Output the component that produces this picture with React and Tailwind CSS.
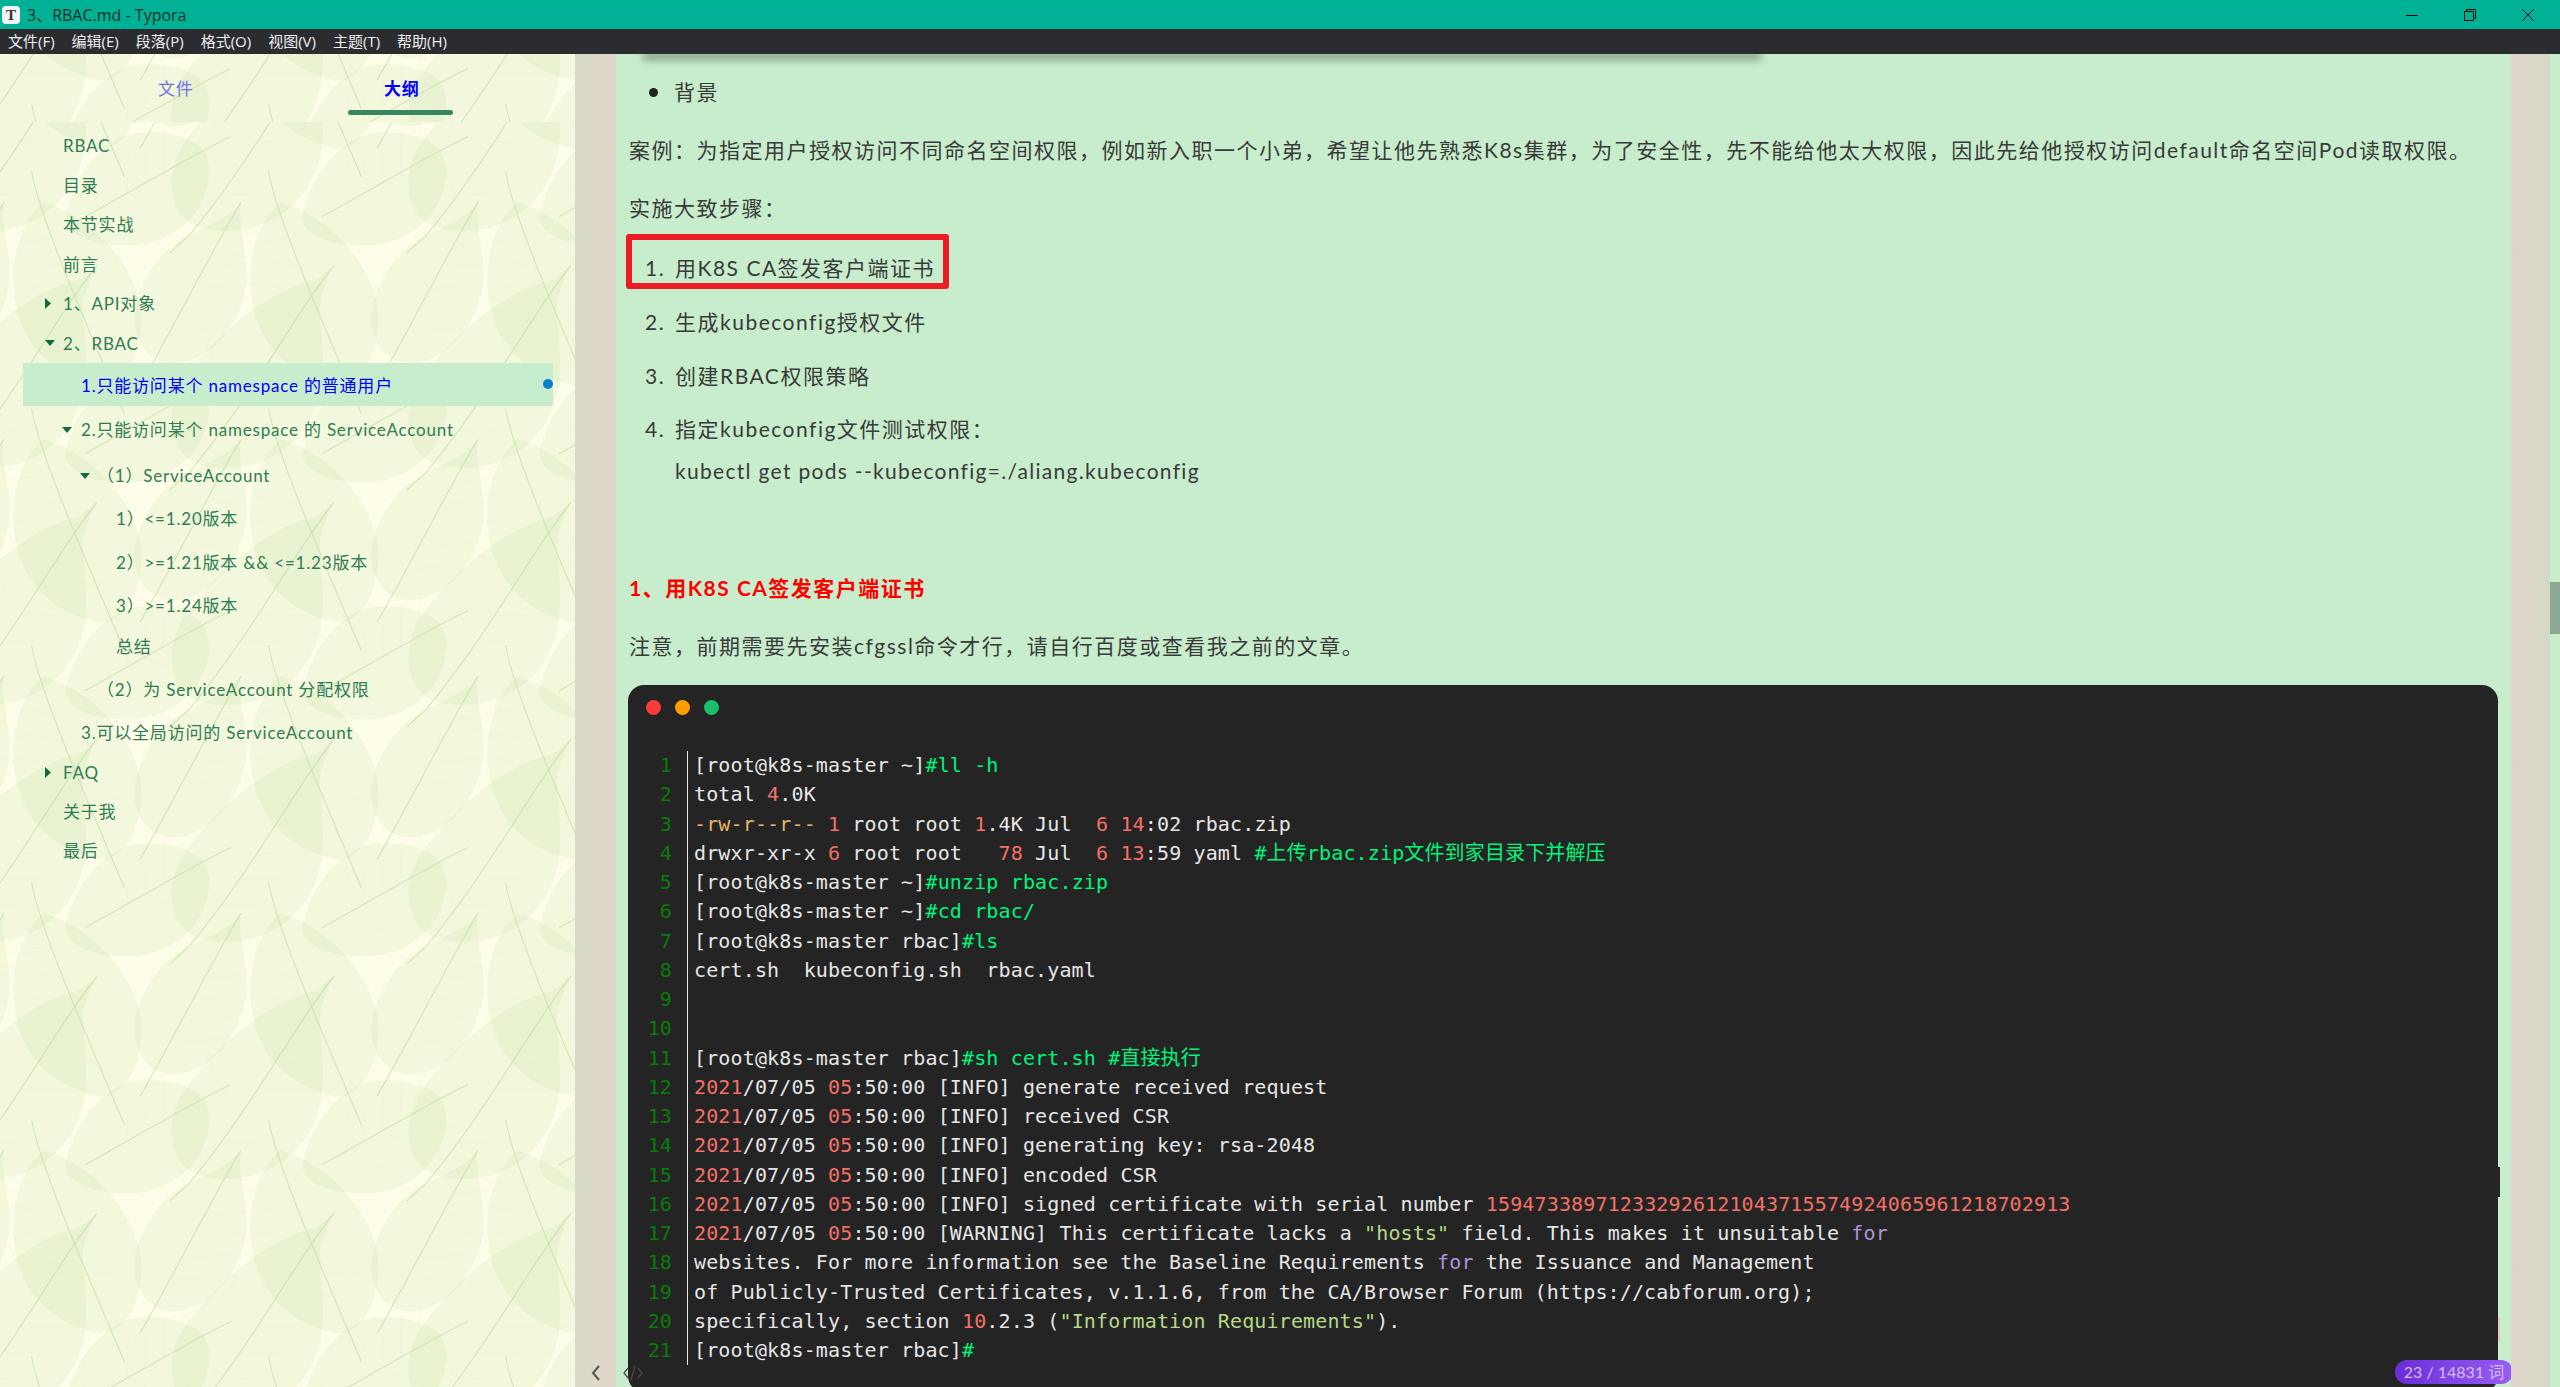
const uiFont = { fontFamily: '"Lato", "Noto Sans CJK SC", sans-serif' };

const LEAVES = [
  {
    body: "M110 255 C60 300 25 400 35 500 C45 620 110 730 250 760 C320 770 370 650 355 540 C340 440 250 300 110 255 Z",
    rib: "M80 170 C100 300 230 620 315 840",
    from: [95, 260],
    to: [290, 760],
  },
  {
    body: "M800 470 C700 490 560 600 470 740 C430 800 425 880 450 930 C480 990 560 1000 640 980 C740 950 800 860 815 760 C825 640 800 540 815 510 C825 480 835 445 845 430 Z",
    rib: "M845 430 C760 540 640 790 480 1000 L430 1050",
    from: [800, 500],
    to: [490, 985],
  },
  {
    body: "M610 255 C560 330 450 330 390 430 C340 510 330 580 350 630 C370 690 420 710 470 695 C560 670 620 560 625 460 C625 380 600 310 610 255 Z",
    rib: "M610 255 C540 380 430 620 355 760",
    from: [590, 295],
    to: [385, 695],
  },
  {
    body: "M165 950 C180 880 220 770 320 725 C380 705 470 720 510 760 C540 800 535 870 500 930 C450 1010 370 1035 300 1028 C230 1025 170 1000 165 950 Z",
    rib: "M585 728 C500 770 350 870 215 950",
    from: [520, 765],
    to: [215, 950],
  },
];

// side veins, worked out from the line of the midrib
const veins = (leaf) => {
  const [x1, y1] = leaf.from;
  const [x2, y2] = leaf.to;
  const dx = x2 - x1;
  const dy = y2 - y1;
  let d = "";
  [0.2, 0.35, 0.5, 0.65, 0.8].forEach((t) => {
    const x = x1 + dx * t;
    const y = y1 + dy * t;
    [1, -1].forEach((s) => {
      const ex = x - dx * 0.18 + s * dy * 0.28;
      const ey = y - dy * 0.18 - s * dx * 0.28;
      d += `M${x} ${y} L${ex} ${ey} `;
    });
  });
  return d;
};

const LeafBg = ({ id }) => (
  <svg className="absolute inset-0 w-full h-full pointer-events-none" aria-hidden="true">
    <defs>
      <g id={`${id}-leaves`}>
        {LEAVES.map((leaf, i) => (
          <g key={i}>
            <path d={leaf.body} fill="#a6cf88" fillOpacity="0.13" />
            <path d={veins(leaf)} stroke="#bcdaa0" strokeOpacity="0.12" strokeWidth="1" fill="none" />
            <path d={leaf.rib} stroke="#bcdca0" strokeOpacity="0.6" strokeWidth="3" fill="none" />
          </g>
        ))}
      </g>
      <pattern
        id={id}
        patternUnits="userSpaceOnUse"
        x="0"
        y="-12"
        width="237"
        height="237"
        viewBox="0 0 600 655"
        preserveAspectRatio="none"
      >
        {[-600, 0, 600].map((x) =>
          [-655, 0, 655].map((y) => <use key={`${x}${y}`} href={`#${id}-leaves`} x={x} y={y} />)
        )}
      </pattern>
    </defs>
    <rect width="100%" height="100%" fill={`url(#${id})`} />
  </svg>
);

const Right = () => (
  <svg width="6" height="11" viewBox="0 0 6 11" className="text-[#0f6b3e]">
    <path d="M0 0 L6 5.5 L0 11 Z" fill="currentColor" />
  </svg>
);

const Down = () => (
  <svg width="10" height="6" viewBox="0 0 10 6" className="text-[#0f6b3e]">
    <path d="M0 0 L10 0 L5 6 Z" fill="currentColor" />
  </svg>
);

const OUTLINE = [
  { text: "RBAC", h: "h-[39.5px]", pl: "pl-[63px]" },
  { text: "目录", h: "h-[39.5px]", pl: "pl-[63px]" },
  { text: "本节实战", h: "h-[39.5px]", pl: "pl-[63px]" },
  { text: "前言", h: "h-[39.5px]", pl: "pl-[63px]" },
  { text: "1、API对象", h: "h-[39.5px]", pl: "pl-[45px]", arrow: "right", gap: "w-[18px]" },
  { text: "2、RBAC", h: "h-[39.5px]", pl: "pl-[45px]", arrow: "down", gap: "w-[18px]" },
  { text: "1.只能访问某个 namespace 的普通用户", active: true },
  { text: "2.只能访问某个 namespace 的 ServiceAccount", h: "h-[47px]", pl: "pl-[62px]", arrow: "down", gap: "w-[19px]" },
  { text: "（1）ServiceAccount", h: "h-[45px]", pl: "pl-[80px]", arrow: "down", gap: "w-[17px]" },
  { text: "1）<=1.20版本", h: "h-[42px]", pl: "pl-[116px]" },
  { text: "2）>=1.21版本 && <=1.23版本", h: "h-[45px]", pl: "pl-[116px]" },
  { text: "3）>=1.24版本", h: "h-[41px]", pl: "pl-[116px]" },
  { text: "总结", h: "h-[42px]", pl: "pl-[116px]" },
  { text: "（2）为 ServiceAccount 分配权限", h: "h-[44px]", pl: "pl-[97px]" },
  { text: "3.可以全局访问的 ServiceAccount", h: "h-[41px]", pl: "pl-[81px]" },
  { text: "FAQ", h: "h-[39px]", pl: "pl-[45px]", arrow: "right", gap: "w-[18px]" },
  { text: "关于我", h: "h-[39px]", pl: "pl-[63px]" },
  { text: "最后", h: "h-[40px]", pl: "pl-[63px]" },
];

const Sidebar = () => (
  <aside
    className="w-[575px] shrink-0 flex flex-col bg-[#fefde7] text-[17px] tracking-[0.8px] text-[#2f7d54]"
    style={uiFont}
  >
    <div className="relative h-[68px] shrink-0">
      <LeafBg id="leaf-head" />
      <div className="relative h-full">
        <div className="flex">
          <div className="w-[237px] pl-[158px] pt-[23px] leading-6 text-[#6f6fe8]">文件</div>
          <div className="w-[220px] pl-[147px] pt-[23px] leading-6 font-bold text-[#0000ff]">大纲</div>
        </div>
        <div className="ml-[348px] mt-[9px] w-[105px] h-[5px] rounded-full bg-[#38875c]" />
      </div>
    </div>
    <div className="relative flex-1 pt-[4px]">
      <LeafBg id="leaf-list" />
      <div className="relative">
        {OUTLINE.map((row) =>
          row.active ? (
            <div
              key={row.text}
              className="relative ml-[23px] w-[530px] h-[43px] pl-[58px] pt-[2px] flex items-center bg-[#c7edcc] text-[#0000ff]"
            >
              {row.text}
              <span className="absolute right-0 top-[16px] w-[10px] h-[10px] rounded-full bg-[#0a7fd0]" />
            </div>
          ) : (
            <div key={row.text} className={`flex items-center ${row.h} ${row.pl}`}>
              {row.arrow && (
                <span className={`${row.gap} flex items-center`}>{row.arrow === "right" ? <Right /> : <Down />}</span>
              )}
              {row.text}
            </div>
          )
        )}
      </div>
    </div>
  </aside>
);

const R = ({ children }) => <span className="text-[#f47067]">{children}</span>;
const G = ({ children }) => <span className="text-[#00f57a]">{children}</span>;
const Y = ({ children }) => <span className="text-[#e5b567]">{children}</span>;
const S = ({ children }) => <span className="text-[#b5d986]">{children}</span>;
const K = ({ children }) => <span className="text-[#b392d8]">{children}</span>;

const stamp = (
  <>
    <R>2021</R>/07/05 <R>05</R>:50:00
  </>
);

const CODE = [
  <>[root@k8s-master ~]<G>#ll -h</G></>,
  <>total <R>4</R>.0K</>,
  <><Y>-rw-r--r--</Y> <R>1</R> root root <R>1</R>.4K Jul  <R>6</R> <R>14</R>:02 rbac.zip</>,
  <>drwxr-xr-x <R>6</R> root root   <R>78</R> Jul  <R>6</R> <R>13</R>:59 yaml <G>#上传rbac.zip文件到家目录下并解压</G></>,
  <>[root@k8s-master ~]<G>#unzip rbac.zip</G></>,
  <>[root@k8s-master ~]<G>#cd rbac/</G></>,
  <>[root@k8s-master rbac]<G>#ls</G></>,
  <>cert.sh  kubeconfig.sh  rbac.yaml</>,
  <></>,
  <></>,
  <>[root@k8s-master rbac]<G>#sh cert.sh #直接执行</G></>,
  <>{stamp} [INFO] generate received request</>,
  <>{stamp} [INFO] received CSR</>,
  <>{stamp} [INFO] generating key: rsa-2048</>,
  <>{stamp} [INFO] encoded CSR</>,
  <>{stamp} [INFO] signed certificate with serial number <R>159473389712332926121043715574924065961218702913</R></>,
  <>{stamp} [WARNING] This certificate lacks a <S>"hosts"</S> field. This makes it unsuitable <K>for</K></>,
  <>websites. For more information see the Baseline Requirements <K>for</K> the Issuance and Management</>,
  <>of Publicly-Trusted Certificates, v.1.1.6, from the CA/Browser Forum (https://cabforum.org);</>,
  <>specifically, section <R>10</R>.2.3 (<S>"Information Requirements"</S>).</>,
  <>[root@k8s-master rbac]<G>#</G></>,
];

const CodeBlock = () => (
  <div className="relative mt-[24px] h-[707px] shrink-0 rounded-[16px] bg-[#242424]">
    <div className="flex items-center h-[44px] pl-[18px] gap-[14px]">
      <span className="w-[15px] h-[15px] rounded-full bg-[#fc3a3a]" />
      <span className="w-[15px] h-[15px] rounded-full bg-[#ff9d00]" />
      <span className="w-[15px] h-[15px] rounded-full bg-[#17bf6b]" />
    </div>
    <div
      className="flex mt-[22px] text-[20px] leading-[29.25px] tracking-[0.14px] text-[#e6e6e6] whitespace-pre"
      style={{ fontFamily: '"DejaVu Sans Mono", "Noto Sans CJK SC", monospace' }}
    >
      <div className="w-[44px] text-right text-[#0a7c0a]">
        {CODE.map((_, i) => (
          <div key={i} className="h-[29.25px]">
            {i + 1}
          </div>
        ))}
      </div>
      <div className="ml-[15px] pl-[6px] border-l border-[#e6e6e6]">
        {CODE.map((line, i) => (
          <div key={i} className="h-[29.25px]">
            {line}
          </div>
        ))}
      </div>
    </div>
  </div>
);

const Para = ({ className = "", children }) => (
  <p className={`ml-[1px] h-[30px] leading-[30px] ${className}`}>{children}</p>
);

const Main = () => (
  <main
    className="relative flex-1 flex flex-col pt-[23px] pl-[12px] pr-[13px] bg-[#c7edcc] text-[21px] tracking-[1.5px] text-[#3a3a3a] overflow-hidden"
    style={uiFont}
  >
    <div className="absolute top-0 left-[30px] w-[1112px] h-0 shadow-[0_2px_9px_3px_rgba(0,0,0,0.45)]" />
    <div className="flex items-center ml-[21px] h-[30px]">
      <span className="w-[9px] h-[9px] rounded-full bg-[#222]" />
      <span className="ml-[16px]">背景</span>
    </div>
    <Para className="mt-[28px] whitespace-nowrap">
      案例：为指定用户授权访问不同命名空间权限，例如新入职一个小弟，希望让他先熟悉K8s集群，为了安全性，先不能给他太大权限，因此先给他授权访问default命名空间Pod读取权限。
    </Para>
    <Para className="mt-[28px]">实施大致步骤：</Para>
    <div className="relative mt-[30px] ml-[17px] h-[30px] leading-[30px]">
      1. <span className="ml-[3px]">用K8S CA签发客户端证书</span>
      <span className="absolute left-[-19px] top-[-19px] w-[323px] h-[55px] border-[6px] border-[#ed1c24] rounded-[3px]" />
    </div>
    <div className="mt-[24px] ml-[17px] h-[30px] leading-[30px]">
      2. <span className="ml-[3px]">生成kubeconfig授权文件</span>
    </div>
    <div className="mt-[24px] ml-[17px] h-[30px] leading-[30px]">
      3. <span className="ml-[3px]">创建RBAC权限策略</span>
    </div>
    <div className="mt-[23px] ml-[17px] h-[30px] leading-[30px]">
      4. <span className="ml-[3px]">指定kubeconfig文件测试权限：</span>
    </div>
    <div className="mt-[12px] ml-[47px] h-[30px] leading-[30px] tracking-[1.3px]">kubectl get pods --kubeconfig=./aliang.kubeconfig</div>
    <Para className="mt-[87px] font-bold text-[#ff0000]">1、用K8S CA签发客户端证书</Para>
    <Para className="mt-[28px]">注意，前期需要先安装cfgssl命令才行，请自行百度或查看我之前的文章。</Para>
    <CodeBlock />
    <svg width="20" height="16" viewBox="0 0 20 16" className="absolute left-[7px] bottom-[6px] text-[#4a4a4a]" fill="none" stroke="currentColor" strokeWidth="1.3">
      <path d="M5 3 L1 8 L5 13 M15 3 L19 8 L15 13 M12 1 L8 15" />
    </svg>
    <div className="absolute right-[11px] top-[1113px] w-[2px] h-[30px] bg-[#242424]" />
    <div className="absolute right-[11px] top-[1263px] w-[2px] h-[24px] bg-[#e8c7b8]" />
    <div className="absolute right-[-2px] bottom-[3px] w-[118px] h-[24px] flex items-center justify-center rounded-full bg-gradient-to-r from-[#6a2bd9] to-[#9a5cf5] text-[16px] tracking-normal text-[#d5bff7] whitespace-nowrap">
      23 / 14831 词
    </div>
  </main>
);

const Gutter = ({ flip }) => (
  <div
    className={`relative shrink-0 ${
      flip ? "w-[39px] bg-gradient-to-r from-[#e2d3cb] to-[#d6dac8]" : "w-[41px] bg-gradient-to-r from-[#d6dac8] to-[#e2d6cc]"
    }`}
  >
    {!flip && (
      <svg width="12" height="18" viewBox="0 0 12 18" className="absolute left-[15px] bottom-[5px]" fill="none" stroke="#555" strokeWidth="2">
        <path d="M9 2 L3 9 L9 16" />
      </svg>
    )}
  </div>
);

const WindowButtons = () => (
  <div className="flex items-center gap-[46px] pr-[26px]">
    <svg width="12" height="12" viewBox="0 0 12 12" fill="none" stroke="#000">
      <path d="M0 6.5 H12" />
    </svg>
    <svg width="12" height="12" viewBox="0 0 12 12" fill="none" stroke="#000">
      <path d="M0.5 2.5 H9.5 V11.5 H0.5 Z M2.5 2.5 V0.5 H11.5 V9.5 H9.5" />
    </svg>
    <svg width="12" height="12" viewBox="0 0 12 12" fill="none" stroke="#000">
      <path d="M0 0 L12 12 M12 0 L0 12" />
    </svg>
  </div>
);

const MENUS = ["文件(F)", "编辑(E)", "段落(P)", "格式(O)", "视图(V)", "主题(T)", "帮助(H)"];

export default function App() {
  return (
    <div className="w-[2560px] h-[1387px] flex flex-col overflow-hidden">
      <header
        className="h-[29px] shrink-0 flex items-center justify-between bg-[#00b295] text-[#12302b]"
        style={{ fontFamily: '"Open Sans", "Noto Sans CJK SC", sans-serif' }}
      >
        <div className="flex items-center pl-[2px]">
          <span
            className="w-[18px] h-[18px] rounded-[4px] bg-[#f4f4f4] text-[#333] text-[15px] leading-[18px] text-center font-bold"
            style={{ fontFamily: '"Liberation Serif", serif' }}
          >
            T
          </span>
          <span className="ml-[7px] text-[16px]">3、RBAC.md - Typora</span>
        </div>
        <WindowButtons />
      </header>
      <nav
        className="h-[25px] shrink-0 flex items-center gap-[17px] pl-[8px] bg-[#2b2c30] text-[15px] text-[#eeeeee]"
        style={{ fontFamily: '"Open Sans", "Noto Sans CJK SC", sans-serif' }}
      >
        {MENUS.map((m) => (
          <span key={m}>{m}</span>
        ))}
      </nav>
      <div className="flex-1 flex min-h-0">
        <Sidebar />
        <Gutter />
        <Main />
        <Gutter flip />
        <div className="w-[10px] shrink-0 bg-[#c7edcc] pt-[528px]">
          <div className="h-[52px] bg-[#8aa892]" />
        </div>
      </div>
    </div>
  );
}
